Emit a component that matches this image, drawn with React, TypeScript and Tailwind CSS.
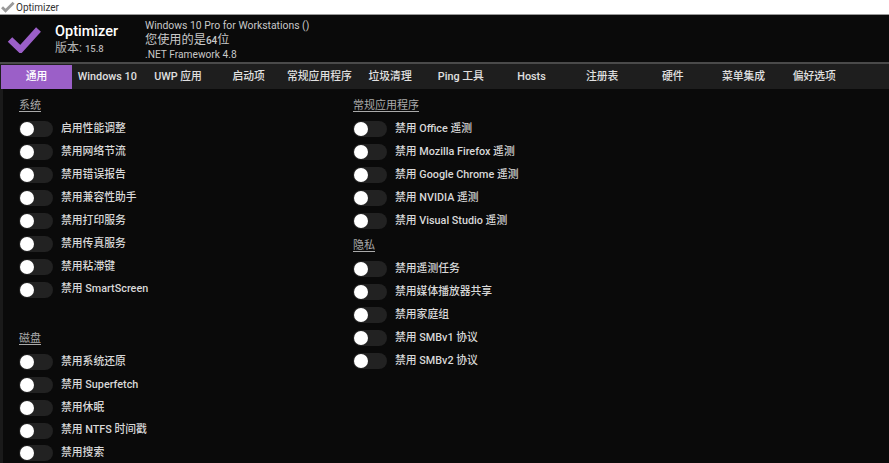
import React from "react";

const tabs = ["通用", "Windows 10", "UWP 应用", "启动项", "常规应用程序", "垃圾清理", "Ping 工具", "Hosts", "注册表", "硬件", "菜单集成", "偏好选项"];

const Toggle = ({ label }: { label: string }) => (
  <div className="flex items-center h-[22.9px]">
    <div className="flex items-center w-[34px] h-[16px] rounded-full bg-[#222222] shrink-0">
      <div className="ml-[1px] w-[14px] h-[14px] rounded-full bg-white" />
    </div>
    <span className="ml-[8px] text-[10.8px] font-medium text-[#d8d8d8] whitespace-nowrap">{label}</span>
  </div>
);

const Group = ({ title, items }: { title: string; items: string[] }) => (
  <div>
    <div className="h-[22.9px] flex items-center text-[11px] text-[#aaaaaa] underline underline-offset-2">{title}</div>
    {items.map((item) => (
      <Toggle key={item} label={item} />
    ))}
  </div>
);

export default function App() {
  return (
    <div className="w-[889px] h-[463px] overflow-hidden flex flex-col bg-[#0a0a0a] font-['Roboto','Noto_Sans_CJK_SC',sans-serif]">
      <div className="h-[15px] shrink-0 bg-white border-b border-[#9a9a9a] flex items-center pl-[1px]">
        <svg width="14" height="12" viewBox="0 0 40 32">
          <path d="M3 17l10 10L36 4" fill="none" stroke="#9a9a9a" strokeWidth="8" />
        </svg>
        <span className="ml-[1px] text-[10px] text-[#333333]">Optimizer</span>
      </div>

      <div className="h-[47px] shrink-0 flex items-center bg-[#0a0a0a]">
        <svg className="ml-[7px]" width="35" height="28" viewBox="0 0 35 28">
          <path d="M3 14.5l10.5 10L31.5 4.5" fill="none" stroke="#9b5fc8" strokeWidth="6.5" />
        </svg>
        <div className="ml-[13px] w-[90px] pt-[2px]">
          <div className="text-[14.5px] leading-[17px] font-medium text-white">Optimizer</div>
          <div className="text-[12px] leading-[16px] text-[#b5b5b5]">
            版本: <span className="text-[9.5px] font-medium">15.8</span>
          </div>
        </div>
        <div className="flex flex-col text-[#c8c8c8] pt-[3px]">
          <div className="text-[10.4px] leading-[15px]">Windows 10 Pro for Workstations ()</div>
          <div className="text-[12.2px] leading-[15px]">
            您使用的是<span className="text-[10px] font-medium">64</span>位
          </div>
          <div className="text-[10.2px] leading-[14px]">.NET Framework 4.8</div>
        </div>
      </div>

      <div className="h-[2px] shrink-0 bg-[#4a4a4a]" />

      <div className="h-[25px] shrink-0 bg-[#1e1e1e] flex pl-[1px] pt-[1px]">
        {tabs.map((tab, i) => (
          <div
            key={tab}
            className={
              i === 0
                ? "w-[71px] flex items-center justify-center text-[10.8px] font-medium text-white bg-[#9b5fc8]"
                : "w-[70.7px] flex items-center justify-center text-[10.8px] font-medium text-[#e0e0e0]"
            }
          >
            {tab}
          </div>
        ))}
      </div>

      <div className="flex pl-[19px] pt-[6px] border-l-[3px] border-[#1a1a1a]">
        <div className="w-[331px] flex flex-col gap-[26.5px] -ml-[3px]">
          <Group
            title="系统"
            items={["启用性能调整", "禁用网络节流", "禁用错误报告", "禁用兼容性助手", "禁用打印服务", "禁用传真服务", "禁用粘滞键", "禁用 SmartScreen"]}
          />
          <Group title="磁盘" items={["禁用系统还原", "禁用 Superfetch", "禁用休眠", "禁用 NTFS 时间戳", "禁用搜索"]} />
        </div>
        <div className="ml-[3px] flex flex-col gap-[2.5px]">
          <Group
            title="常规应用程序"
            items={["禁用 Office 遥测", "禁用 Mozilla Firefox 遥测", "禁用 Google Chrome 遥测", "禁用 NVIDIA 遥测", "禁用 Visual Studio 遥测"]}
          />
          <Group title="隐私" items={["禁用遥测任务", "禁用媒体播放器共享", "禁用家庭组", "禁用 SMBv1 协议", "禁用 SMBv2 协议"]} />
        </div>
      </div>
    </div>
  );
}
